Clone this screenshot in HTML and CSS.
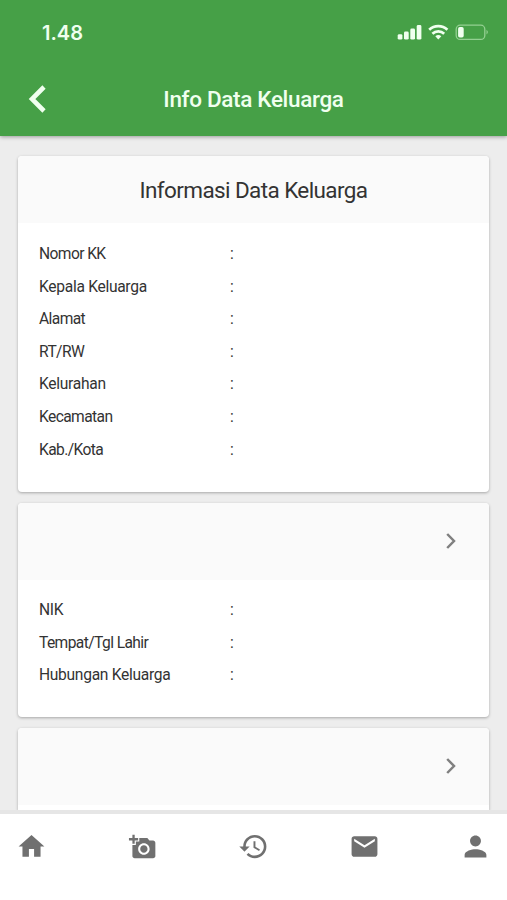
FILE: index.html
```html
<!DOCTYPE html>
<html lang="id">
<head>
<meta charset="utf-8">
<title>Info Data Keluarga</title>
<link rel="stylesheet" href="styles.css">
</head>
<body>
<div class="app">
  <header class="header">
    <div class="status">
      <span class="time">1.48</span>
      <svg class="status-icons" width="94" height="18" viewBox="0 0 94 18">
        <g fill="#f0ffef">
          <rect x="1.700" y="10.200" width="4.700" height="5.400" rx="1.400"/>
          <rect x="8" y="7.500" width="4.700" height="8.100" rx="1.400"/>
          <rect x="14.300" y="4.500" width="4.700" height="11.100" rx="1.400"/>
          <rect x="20.700" y="1" width="4.700" height="14.600" rx="1.400"/>
          <path d="M42.300 15.500l-3-3.200a4.600 4.600 0 0 1 6 0z"/>
        </g>
        <g fill="none" stroke="#f0ffef" stroke-width="2.700">
          <path d="M33.200 5.800a13.200 13.200 0 0 1 18.200 0"/>
          <path d="M36.400 9.700a8.600 8.600 0 0 1 11.800 0"/>
        </g>
        <rect x="60.200" y="1.200" width="28.600" height="14.200" rx="4" fill="none" stroke="#94d092" stroke-width="1.300"/>
        <path d="M90.500 5.800q2.800 2.300 0 4.800z" fill="#94d092"/>
        <rect x="62.100" y="3.100" width="5.600" height="10.400" rx="1.700" fill="#f0ffef"/>
      </svg>
    </div>
    <div class="toolbar">
      <svg class="back" width="18" height="28" viewBox="0 0 18 28"><path d="M16 2 4 14l12 12" fill="none" stroke="#f0ffef" stroke-width="4.600"/></svg>
      <h1 class="title">Info Data Keluarga</h1>
    </div>
  </header>

  <main class="content">
    <section class="card">
      <div class="card-head card-head-title"><h2 class="card-title">Informasi Data Keluarga</h2></div>
      <dl class="rows rows-main">
        <div class="row tight"><dt>Nomor KK</dt><dd>:</dd></div>
        <div class="row"><dt>Kepala Keluarga</dt><dd>:</dd></div>
        <div class="row tight"><dt>Alamat</dt><dd>:</dd></div>
        <div class="row tight"><dt>RT/RW</dt><dd>:</dd></div>
        <div class="row"><dt>Kelurahan</dt><dd>:</dd></div>
        <div class="row tight"><dt>Kecamatan</dt><dd>:</dd></div>
        <div class="row tight"><dt>Kab./Kota</dt><dd>:</dd></div>
      </dl>
    </section>
    <section class="card">
      <div class="card-head card-head-link">
        <svg width="12" height="18" viewBox="0 0 12 18"><path d="M2.200 2 9 9l-6.800 7" fill="none" stroke="#808080" stroke-width="2.500"/></svg>
      </div>
      <dl class="rows">
        <div class="row"><dt>NIK</dt><dd>:</dd></div>
        <div class="row tight"><dt>Tempat/Tgl Lahir</dt><dd>:</dd></div>
        <div class="row"><dt>Hubungan Keluarga</dt><dd>:</dd></div>
      </dl>
    </section>
    <section class="card card-last">
      <div class="card-head card-head-link">
        <svg width="12" height="18" viewBox="0 0 12 18"><path d="M2.200 2 9 9l-6.800 7" fill="none" stroke="#808080" stroke-width="2.500"/></svg>
      </div>
    </section>
  </main>

  <nav class="tabs">
    <svg viewBox="0 0 24 24"><path d="M10 20v-6h4v6h5v-8h3L12 3 2 12h3v8z"/></svg>
    <svg viewBox="0 0 27 27"><path transform="translate(1.700 2.200)" d="M3 4V1h2v3h3v2H5v3H3V6H0V4h3zm3 6V7h3V4h7l1.830 2H21c1.100 0 2 .9 2 2v11.500c0 1.100-.9 2-2 2H5c-1.100 0-2-.9-2-2V10h3zm7 8.500c2.760 0 5-2.240 5-5s-2.240-5-5-5-5 2.240-5 5 2.240 5 5 5zm-3.200-5c0 1.770 1.430 3.200 3.200 3.200s3.200-1.430 3.200-3.200-1.430-3.200-3.200-3.200-3.200 1.430-3.200 3.200z"/></svg>
    <svg viewBox="0 0 24 24"><path d="M13 3a9 9 0 0 0-9 9H1l3.890 3.890.07.14L9 12H6c0-3.870 3.130-7 7-7s7 3.130 7 7-3.130 7-7 7c-1.930 0-3.680-.79-4.940-2.060l-1.420 1.420A8.954 8.954 0 0 0 13 21a9 9 0 0 0 0-18zm-1 5v5l4.280 2.540.72-1.210-3.500-2.080V8H12z"/></svg>
    <svg viewBox="0 0 24 24"><path d="M20 4H4c-1.100 0-1.990.9-1.990 2L2 18c0 1.100.9 2 2 2h16c1.100 0 2-.9 2-2V6c0-1.100-.9-2-2-2zm0 4-8 5-8-5V6l8 5 8-5v2z"/></svg>
    <svg viewBox="0.600 0.600 22.800 22.800"><path d="M12 12c2.210 0 4-1.790 4-4s-1.790-4-4-4-4 1.790-4 4 1.790 4 4 4zm0 2c-2.670 0-8 1.340-8 4v2h16v-2c0-2.660-5.330-4-8-4z"/></svg>
  </nav>
</div>
</body>
</html>
```
FILE: styles.css
```css
* { box-sizing: border-box; }

body {
  margin: 0;
  font-family: Roboto, "Liberation Sans", sans-serif;
  color: #333;
}

.app {
  display: flex;
  flex-direction: column;
  height: 900px;
  overflow: hidden;
  background: #ededed;
}

.header {
  flex: none;
  height: 136px;
  background: #46a047;
  box-shadow: 0 1px 4px rgba(0, 0, 0, 0.35);
  color: #f0ffef;
}

.status {
  display: flex;
  justify-content: space-between;
  align-items: center;
  height: 65px;
  padding: 1px 17px 0 42px;
}

.time {
  font: 600 20px/24px Inter, sans-serif;
}

.toolbar {
  display: grid;
  grid-template-columns: 60px 1fr 60px;
  align-items: center;
  height: 68px;
}

.back { margin-left: 28px; }

.title {
  margin: 0;
  text-align: center;
  font-size: 22.5px;
  font-weight: 500;
  letter-spacing: -0.33px;
  line-height: 28px;
  white-space: nowrap;
}

.content {
  flex: none;
  display: flex;
  flex-direction: column;
  gap: 11px;
  height: 674px;
  padding: 20px 18px 0;
}

.card {
  flex: none;
  border-radius: 4px;
  background: #fff;
  box-shadow: 0 1px 3px rgba(0, 0, 0, 0.3);
  overflow: hidden;
}

.card-head { background: #fafafa; }

.card-head-title {
  height: 67px;
  padding-top: 19px;
}

.card-title {
  margin: 0;
  text-align: center;
  font-size: 22.5px;
  font-weight: 400;
  letter-spacing: -0.6px;
  line-height: 30px;
}

.card-head-link {
  display: flex;
  align-items: center;
  justify-content: flex-end;
  height: 77px;
  padding: 0 32px 1px 0;
}

.rows {
  margin: 0;
  padding: 14px 21px 25.200px;
}

.rows-main { padding: 15px 21px 25.800px; }

.row {
  display: grid;
  grid-template-columns: 191px 1fr;
  height: 32.600px;
  font-size: 15.600px;
  letter-spacing: -0.3px;
  line-height: 32.600px;
}

.row dt, .row dd { margin: 0; }

.tight dt { letter-spacing: -0.6px; }

.card-last {
  height: 82px;
  border-radius: 4px 4px 0 0;
}

.tabs {
  flex: 1;
  display: flex;
  justify-content: space-between;
  align-items: flex-start;
  padding: 17px 16px 0;
  border-top: 4px solid #e6e6e6;
  background: #fff;
}

.tabs svg {
  width: 31px;
  height: 31px;
  fill: #707070;
}
```
